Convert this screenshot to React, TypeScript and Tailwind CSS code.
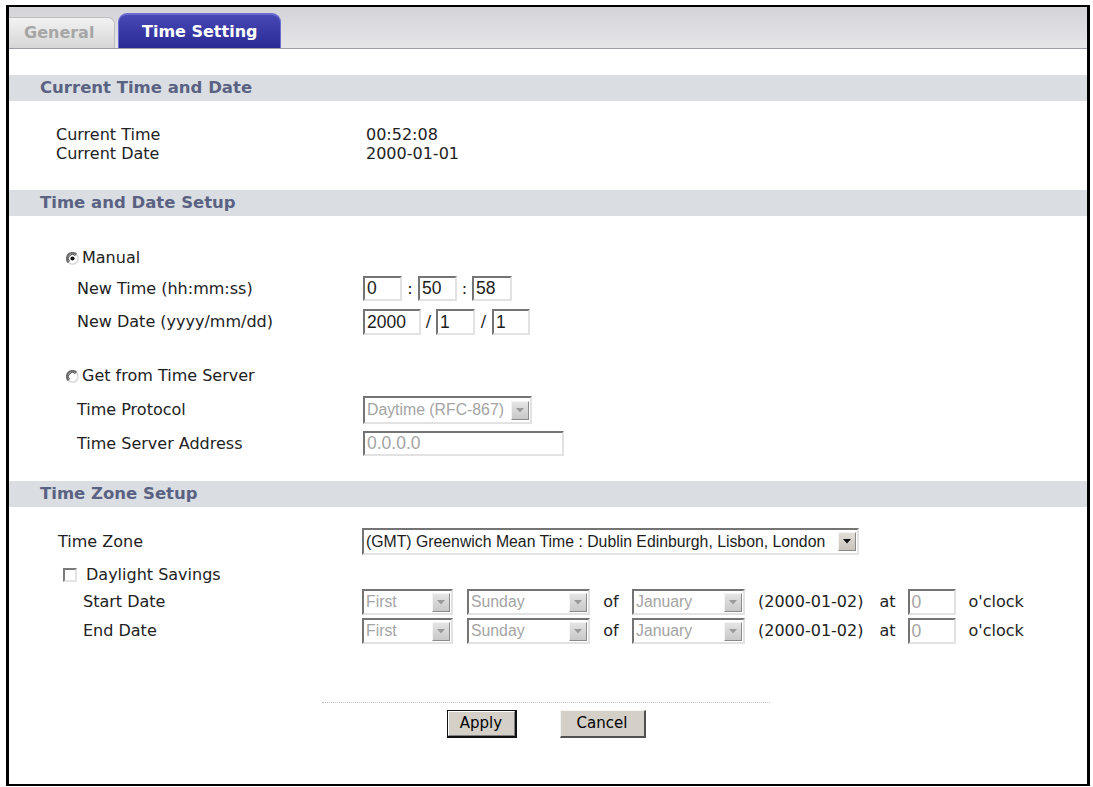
import React from "react";

const inset =
    "border-2 border-t-[#747474] border-l-[#747474] border-b-[#e2e2e2] border-r-[#e2e2e2] bg-white";

function Radio({checked}: {checked?: boolean}) {
    return (
        <svg width="13" height="13" viewBox="0 0 13 13" className="shrink-0">
            <circle cx="6.5" cy="6.5" r="5.6" fill="#ffffff" stroke="#d6d6d6" strokeWidth="1.4"/>
            <path d="M2.5 10.5 A5.6 5.6 0 0 1 10.5 2.5" fill="none" stroke="#6a6a6a" strokeWidth="1.8"/>
            <path d="M3.6 9.4 A4.1 4.1 0 0 1 9.4 3.6" fill="none" stroke="#3a3a3a" strokeWidth="1"/>
            {checked && <circle cx="6.5" cy="6.5" r="2.1" fill="#111111"/>}
        </svg>
    );
}

function Checkbox() {
    return (
        <span className="w-[14px] h-[14px] shrink-0 border-2 border-t-[#7a7a7a] border-l-[#7a7a7a] border-b-[#e4e4e4] border-r-[#e4e4e4] bg-white"/>
    );
}

function TextBox({value, w, h = 25, disabled}: {value: string, w: number, h?: number, disabled?: boolean}) {
    return (
        <div
            className={`${inset} flex items-center pl-[2px] font-['Liberation_Sans',Arial,sans-serif] text-[17.5px] ${disabled ? "text-[#a4a4a4]" : "text-[#1c1c1c]"}`}
            style={{width: w, height: h}}
        >
            {value}
        </div>
    );
}

function Select({value, w, h = 26, disabled}: {value: string, w: number, h?: number, disabled?: boolean}) {
    return (
        <div
            className={`${inset} flex items-center justify-between pl-[2px] pr-[1px] font-['Liberation_Sans',Arial,sans-serif] text-[15.8px] ${disabled ? "text-[#a4a4a4]" : "text-[#1c1c1c]"}`}
            style={{width: w, height: h}}
        >
            <span className="whitespace-nowrap overflow-hidden">{value}</span>
            <span
                className={`w-[18px] h-[19px] shrink-0 flex items-center justify-center border border-t-[#f4f4f4] border-l-[#f4f4f4] border-b-[#8a8a8a] border-r-[#8a8a8a] bg-gradient-to-b ${disabled ? "from-[#e4e4e4] to-[#c8c8c8]" : "from-[#e2ded6] to-[#c8c4bc]"}`}
            >
                <svg width="8" height="5" viewBox="0 0 8 5">
                    <path d="M0 0 H8 L4 4.5 Z" fill={disabled ? "#9a9a9a" : "#111111"}/>
                </svg>
            </span>
        </div>
    );
}

function SectionHeader({title}: {title: string}) {
    return (
        <div className="h-[26px] bg-[#dadee2] flex items-center pl-[31px] font-bold text-[16.5px] text-[#5a6283]">
            {title}
        </div>
    );
}

export default function App() {
    return (
        <div className="w-[1093px] h-[787px] bg-white overflow-hidden pt-[5px] font-['DejaVu_Sans',Verdana,sans-serif] text-[16px] text-[#222222]">
            <div className="ml-[6px] w-[1084px] h-[781px] border-2 border-l-[3px] border-r-[3px] border-black flex flex-col">
                {/* tabs */}
                <div className="h-[42px] shrink-0 border-b border-[#9c9ca4] bg-gradient-to-b from-[#d3d3d8] to-[#e6e6e9] flex items-end gap-[3px]">
                    <div className="w-[106px] h-[31px] rounded-tr-[7px] bg-gradient-to-b from-[#f2f2f2] to-[#d6d6d6] border-r border-t border-[#bdbdbd] flex items-center pl-[15px] font-bold text-[16px] text-[#a6a6a6]">
                        General
                    </div>
                    <div className="w-[163px] h-[35px] rounded-t-[9px] bg-gradient-to-b from-[#4848b6] to-[#2a2a94] border-t-2 border-x border-[#6c6cd0] flex items-center pl-[23px] font-bold text-[16px] text-white">
                        Time Setting
                    </div>
                </div>

                <div className="mt-[26px]">
                    <SectionHeader title="Current Time and Date"/>
                </div>
                <div className="mt-[24px]">
                    <div className="h-[19px] flex items-center">
                        <span className="pl-[47px] w-[357px]">Current Time</span>
                        <span>00:52:08</span>
                    </div>
                    <div className="h-[19px] flex items-center">
                        <span className="pl-[47px] w-[357px]">Current Date</span>
                        <span>2000-01-01</span>
                    </div>
                </div>

                <div className="mt-[27px]">
                    <SectionHeader title="Time and Date Setup"/>
                </div>

                <div className="mt-[32px] h-[20px] flex items-center pl-[57px] gap-[3px]">
                    <Radio checked/>
                    <span>Manual</span>
                </div>
                <div className="mt-[8px] h-[25px] flex items-center">
                    <span className="pl-[68px] w-[354px] shrink-0">New Time (hh:mm:ss)</span>
                    <TextBox value="0" w={39}/>
                    <span className="w-[16px] text-center">:</span>
                    <TextBox value="50" w={39}/>
                    <span className="w-[15px] text-center">:</span>
                    <TextBox value="58" w={40}/>
                </div>
                <div className="mt-[8px] h-[26px] flex items-center">
                    <span className="pl-[68px] w-[354px] shrink-0">New Date (yyyy/mm/dd)</span>
                    <TextBox value="2000" w={58} h={26}/>
                    <span className="w-[15px] text-center">/</span>
                    <TextBox value="1" w={39} h={26}/>
                    <span className="w-[17px] text-center">/</span>
                    <TextBox value="1" w={38} h={26}/>
                </div>

                <div className="mt-[31px] h-[20px] flex items-center pl-[57px] gap-[3px]">
                    <Radio/>
                    <span>Get from Time Server</span>
                </div>
                <div className="mt-[10px] h-[28px] flex items-center">
                    <span className="pl-[68px] w-[354px] shrink-0">Time Protocol</span>
                    <Select value="Daytime (RFC-867)" w={169} h={28} disabled/>
                </div>
                <div className="mt-[7px] h-[25px] flex items-center">
                    <span className="pl-[68px] w-[354px] shrink-0">Time Server Address</span>
                    <TextBox value="0.0.0.0" w={201} disabled/>
                </div>

                <div className="mt-[25px]">
                    <SectionHeader title="Time Zone Setup"/>
                </div>

                <div className="mt-[21px] h-[27px] flex items-center">
                    <span className="pl-[49px] w-[353px] shrink-0">Time Zone</span>
                    <Select value="(GMT) Greenwich Mean Time : Dublin Edinburgh, Lisbon, London" w={497} h={27}/>
                </div>
                <div className="mt-[10px] h-[20px] flex items-center pl-[54px] gap-[9px]">
                    <Checkbox/>
                    <span>Daylight Savings</span>
                </div>
                {["Start Date", "End Date"].map((label, i) => (
                    <div key={label} className={`${i === 0 ? "mt-[4px]" : "mt-[3px]"} h-[26px] flex items-center`}>
                        <span className="pl-[74px] w-[353px] shrink-0">{label}</span>
                        <Select value="First" w={91} disabled/>
                        <span className="w-[14px]"/>
                        <Select value="Sunday" w={123} disabled/>
                        <span className="w-[42px] text-center">of</span>
                        <Select value="January" w={113} disabled/>
                        <span className="ml-[13px]">(2000-01-02)</span>
                        <span className="ml-[16px]">at</span>
                        <span className="ml-[12px]"><TextBox value="0" w={48} h={26} disabled/></span>
                        <span className="ml-[13px]">o'clock</span>
                    </div>
                ))}

                <div className="mt-[58px] ml-[313px] w-[448px] border-t border-dotted border-[#c0c0c0]"/>
                <div className="mt-[7px] ml-[313px] w-[448px] flex justify-center gap-[43px]">
                    <button className="w-[70px] h-[28px] border border-b-2 border-r-2 border-[#111111] bg-[#d4d0c8] p-0">
                        <div className="h-full border border-t-white border-l-white border-b-[#808080] border-r-[#808080] flex items-center justify-center text-[15px] text-black">
                            Apply
                        </div>
                    </button>
                    <button className="w-[86px] h-[28px] bg-[#d4d0c8] border border-b-2 border-r-2 border-t-[#f4f4f4] border-l-[#f4f4f4] border-b-[#505050] border-r-[#505050] flex items-center justify-center text-[15px] text-black">
                        Cancel
                    </button>
                </div>
            </div>
        </div>
    );
}
